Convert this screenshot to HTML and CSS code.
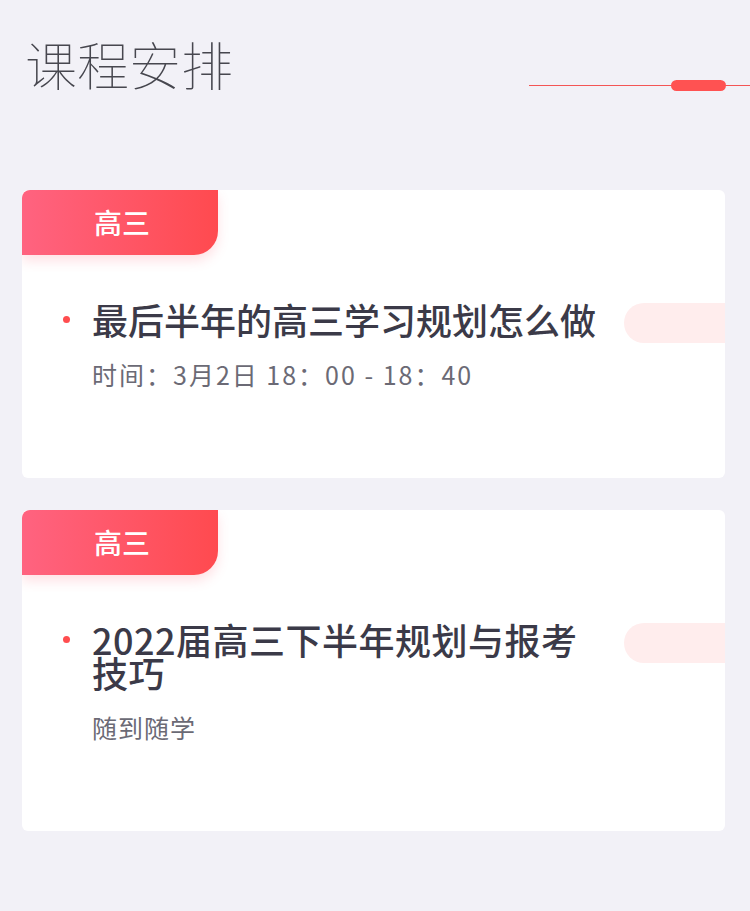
FILE: index.html
```html
<!DOCTYPE html>
<html lang="zh-CN">
<head>
<meta charset="utf-8">
<title>课程安排</title>
<link rel="stylesheet" href="styles.css">
</head>
<body>
<div class="page">
  <header class="header">
    <h1 class="header-title">课程安排</h1>
    <div class="deco"><span class="deco-pill"></span></div>
  </header>

  <section class="card">
    <div class="tag">高三</div>
    <div class="card-pill"></div>
    <div class="card-body">
      <span class="dot"></span>
      <div class="info">
        <div class="info-title">最后半年的高三学习规划怎么做</div>
        <div class="info-sub info-sub--time">时间：3月2日 18：00 - 18：40</div>
      </div>
    </div>
  </section>

  <section class="card">
    <div class="tag">高三</div>
    <div class="card-pill"></div>
    <div class="card-body">
      <span class="dot"></span>
      <div class="info">
        <div class="info-title info-title--wide">2022届高三下半年规划与报考技巧</div>
        <div class="info-sub">随到随学</div>
      </div>
    </div>
  </section>
</div>
</body>
</html>
```

FILE: styles.css
```css
html, body {
  margin: 0;
  padding: 0;
  background: #f2f1f7;
}

body {
  font-family: "Noto Sans CJK SC", "Noto Sans", sans-serif;
  width: 750px;
  min-height: 911px;
}

.page {
  display: flex;
  flex-direction: column;
  gap: 32px;
  padding-bottom: 80px;
}

.header {
  display: flex;
  align-items: flex-end;
  padding: 38px 0 0 25px;
  margin-bottom: 68px;
}

.header-title {
  margin: 0;
  font-size: 52px;
  line-height: 52px;
  font-weight: 100;
  color: #47474f;
  letter-spacing: 0;
}

.deco {
  margin-left: auto;
  width: 221px;
  height: 11px;
  margin-bottom: -1px;
  display: flex;
  align-items: center;
  background: linear-gradient(#f45555, #f45555) center / 100% 1px no-repeat;
}

.deco-pill {
  margin-left: 142px;
  width: 55px;
  height: 11px;
  border-radius: 6px;
  background: #ff5252;
}

.card {
  position: relative;
  margin: 0 25px 0 22px;
  background: #ffffff;
  border-radius: 6px;
  overflow: hidden;
}

.tag {
  width: 196px;
  height: 65px;
  box-sizing: border-box;
  padding-left: 4px;
  border-radius: 8px 0 24px 0;
  background: linear-gradient(to right, #ff6380, #ff4a4f);
  box-shadow: 0 6px 12px rgba(255, 90, 110, 0.18);
  color: #ffffff;
  font-size: 28px;
  line-height: 65px;
  font-weight: 500;
  text-align: center;
}

.card-pill {
  position: absolute;
  top: 113px;
  left: 602px;
  width: 160px;
  height: 40px;
  border-radius: 20px;
  background: #ffeded;
}

.card-body {
  display: flex;
  align-items: flex-start;
  padding: 48px 0 91px 41px;
}

.dot {
  flex: none;
  width: 7px;
  height: 7px;
  border-radius: 50%;
  background: #ff4d4f;
  margin-top: 13px;
  margin-right: 22px;
}

.info {
  width: 510px;
}

.info-title {
  font-size: 36px;
  line-height: 33px;
  font-weight: 500;
  color: #3b3a48;
}

.info-title--wide {
  letter-spacing: 0.5px;
}

.info-sub {
  margin-top: 26px;
  font-size: 25px;
  line-height: 25px;
  letter-spacing: 1px;
  color: #6b6a75;
}

.info-sub--time {
  letter-spacing: 2px;
}
```
